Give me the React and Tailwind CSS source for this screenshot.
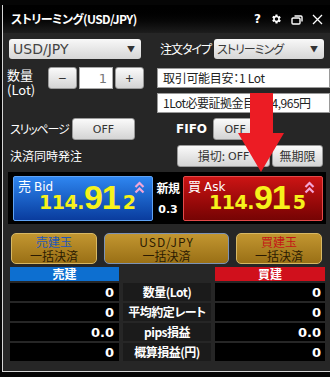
import React from 'react';

const jp = { fontFamily: '"Noto Sans CJK JP", "Noto Sans", sans-serif', fontFeatureSettings: '"palt"' };
const num = { fontFamily: '"DejaVu Sans", sans-serif' };
const big = { fontFamily: '"Liberation Sans", sans-serif' };

function Chevrons() {
  return (
    <svg width="11" height="14" viewBox="0 0 11 14" className="shrink-0">
      <path d="M1.5 6 L5.5 2 L9.5 6" fill="none" stroke="#f3a6d6" strokeWidth="2.2" />
      <path d="M1.5 11.5 L5.5 7.5 L9.5 11.5" fill="none" stroke="#f3a6d6" strokeWidth="2.2" />
    </svg>
  );
}

function Gear() {
  return (
    <svg width="12" height="12" viewBox="0 0 24 24" fill="white">
      <path d="M19.4 13a7.5 7.5 0 0 0 0-2l2.1-1.6-2-3.5-2.5 1a7.6 7.6 0 0 0-1.7-1L15 3h-4l-.4 2.7a7.6 7.6 0 0 0-1.7 1l-2.5-1-2 3.5L6.5 11a7.5 7.5 0 0 0 0 2l-2.1 1.6 2 3.5 2.5-1a7.6 7.6 0 0 0 1.7 1L11 21h4l.4-2.7a7.6 7.6 0 0 0 1.7-1l2.5 1 2-3.5zM13 15.5a3.5 3.5 0 1 1 0-7 3.5 3.5 0 0 1 0 7z" />
    </svg>
  );
}

function GrayButton({ children, className = '' }) {
  return (
    <div
      className={`shrink-0 flex items-center justify-center whitespace-nowrap leading-none rounded-[3px] border border-[#9a9a9a] bg-gradient-to-b from-[#fafafa] to-[#d4d4d4] text-[12px] text-[#333] ${className}`}
    >
      {children}
    </div>
  );
}

function PriceButton({ side, label, last, tone }) {
  const colors =
    tone === 'blue'
      ? 'from-[#2f86f0] to-[#0a3c9e] border-[#5fa3f5]'
      : 'from-[#cc1414] to-[#760404] border-[#e44a4a]';
  return (
    <div className={`relative shrink-0 w-[140px] h-[45px] border bg-gradient-to-b ${colors} rounded-[2px]`}>
      <div className="absolute left-[4px] top-[2px] flex items-baseline gap-[3px] text-white leading-none" style={jp}>
        <span className="text-[13px]">{side}</span>
        <span className="text-[12px]" style={num}>{label}</span>
      </div>
      <div className="absolute right-[7px] top-[4px]">
        <Chevrons />
      </div>
      <div className="absolute right-[16px] bottom-[6px] flex items-baseline text-[#f6f21b] font-bold leading-none">
        <span className="text-[19px] tracking-[-0.5px]" style={num}>114.</span>
        <span className="text-[34px] tracking-[-1px]" style={big}>91</span>
        <span className="text-[19px] ml-[3px]" style={num}>{last}</span>
      </div>
    </div>
  );
}

function GoldButton({ top, topColor, className = '', topClass = '' }) {
  return (
    <div
      className={`shrink-0 flex flex-col items-center justify-center rounded-[5px] border bg-gradient-to-b from-[#c29630] to-[#9a7015] text-[12px] leading-[14px] text-[#2b1b02] ${className}`}
      style={jp}
    >
      <span className={topClass} style={{ color: topColor }}>{top}</span>
      <span>一括決済</span>
    </div>
  );
}

const rows = [
  ['0', '数量(Lot)', '0'],
  ['0', '平均約定レート', '0'],
  ['0.0', 'pips損益', '0.0'],
  ['0', '概算損益(円)', '0'],
];

export default function App() {
  return (
    <div className="relative w-[330px] h-[377px] overflow-hidden bg-[#050505]" style={jp}>
      <div className="ml-[2px] mt-[5px] w-[330px] h-[367px] border-l border-b border-[#d6d6d6] bg-[#262626] flex flex-col">
        {/* title bar */}
        <div className="h-[28px] shrink-0 flex items-center justify-between pl-[8px] pr-[9px] bg-gradient-to-b from-[#000] to-[#1d1d1d]">
          <span className="text-[12px] font-bold text-white tracking-[-0.6px] leading-none whitespace-nowrap">ストリーミング(USD/JPY)</span>
          <div className="flex items-center gap-[9px] text-white">
            <span className="text-[12px] font-bold leading-none" style={num}>?</span>
            <Gear />
            <svg width="12" height="11" viewBox="0 0 12 11" fill="none" stroke="white" strokeWidth="1.4">
              <rect x="1" y="4" width="8" height="6" rx="1" />
              <path d="M3.5 2 H10 a1 1 0 0 1 1 1 V7.5" />
            </svg>
            <svg width="11" height="11" viewBox="0 0 11 11" stroke="white" strokeWidth="1.3">
              <path d="M1 1 L10 10 M10 1 L1 10" />
            </svg>
          </div>
        </div>

        <div className="flex flex-col pl-[4px] pr-[5px]">
          {/* row 1 */}
          <div className="mt-[6px] h-[20px] flex items-center">
            <div className="ml-[2px] shrink-0 w-[132px] h-[20px] rounded-[3px] bg-gradient-to-b from-[#f8f8f8] to-[#d6d6d6] flex items-center justify-between pl-[4px] pr-[6px]">
              <span className="text-[14px] text-[#444] leading-none" style={num}>USD/JPY</span>
              <span className="text-[8px] text-[#333] leading-none">▼</span>
            </div>
            <span className="ml-[19px] w-[51px] shrink-0 text-[12px] text-white whitespace-nowrap leading-none tracking-[-1px]">注文タイプ</span>
            <div className="ml-[3px] shrink-0 w-[110px] h-[20px] rounded-[3px] bg-gradient-to-b from-[#f8f8f8] to-[#d6d6d6] flex items-center justify-between pl-[3px] pr-[6px]">
              <span className="text-[12px] text-[#3a3a3a] leading-none whitespace-nowrap tracking-[-1px]">ストリーミング</span>
              <span className="text-[8px] text-[#333] leading-none">▼</span>
            </div>
          </div>

          {/* row 2-3 */}
          <div className="mt-[8px] h-[46px] flex">
            <div className="w-[146px] shrink-0 flex items-start">
              <div className="text-white text-[13px] leading-[15px] w-[38px] whitespace-nowrap">
                <div>数量</div>
                <div>(Lot)</div>
              </div>
              <GrayButton className="ml-[3px] w-[29px] h-[22px] text-[14px]">−</GrayButton>
              <div className="ml-[2px] shrink-0 w-[34px] h-[22px] bg-white border border-[#aaa] flex items-center justify-end pr-[5px] text-[13px] text-[#777] leading-none" style={num}>1</div>
              <GrayButton className="ml-[2px] w-[29px] h-[22px] text-[14px]">+</GrayButton>
            </div>
            <div className="ml-[4px] mt-[1px] flex flex-col gap-[5px]">
              <div className="w-[173px] h-[20px] bg-white border border-[#999] flex items-center pl-[5px] text-[12px] text-[#222] leading-none whitespace-nowrap tracking-[-0.3px]">取引可能目安：1 Lot</div>
              <div className="w-[173px] h-[20px] bg-white border border-[#999] flex items-center pl-[5px] text-[12px] text-[#222] leading-none whitespace-nowrap tracking-[-0.5px]">1Lot必要証拠金目安：4,965円</div>
            </div>
          </div>

          {/* row 4 */}
          <div className="mt-[5px] flex items-center h-[22px]">
            <span className="ml-[3px] shrink-0 text-[12px] text-white w-[62px] whitespace-nowrap leading-none tracking-[-1.2px]">スリッページ</span>
            <GrayButton className="w-[63px] h-[22px]"><span style={num} className="text-[11px]">OFF</span></GrayButton>
            <span className="ml-[41px] text-[12px] font-bold text-white leading-none" style={num}>FIFO</span>
            <GrayButton className="ml-[6px] w-[44px] h-[22px]"><span style={num} className="text-[11px]">OFF</span></GrayButton>
          </div>

          {/* row 5 */}
          <div className="mt-[5px] flex items-center h-[22px]">
            <span className="ml-[3px] shrink-0 text-[12px] text-white w-[167px] whitespace-nowrap leading-none">決済同時発注</span>
            <GrayButton className="w-[93px] h-[22px]">損切: <span style={num} className="ml-[3px] text-[11px]">OFF</span></GrayButton>
            <GrayButton className="ml-[2px] w-[51px] h-[22px]">無期限</GrayButton>
          </div>

          {/* price strip */}
          <div className="mt-[5px] ml-[1px] w-[318px] h-[52px] bg-black flex items-center pl-[5px]">
            <PriceButton side="売" label="Bid" last="2" tone="blue" />
            <div className="w-[30px] shrink-0 flex flex-col items-center text-white font-bold leading-none">
              <span className="text-[12px] tracking-[-0.5px]">新規</span>
              <span className="mt-[10px] text-[11px]" style={num}>0.3</span>
            </div>
            <PriceButton side="買" label="Ask" last="5" tone="red" />
          </div>

          {/* gold buttons */}
          <div className="mt-[9px] ml-[4px] flex h-[31px]">
            <GoldButton top="売建玉" topColor="#2457b8" className="w-[86px] border-[#d7b864]" />
            <GoldButton top="USD/JPY" topColor="#2b1b02" topClass="tracking-[1px]" className="ml-[7px] w-[125px] border-[#7d93b5]" />
            <GoldButton top="買建玉" topColor="#c41616" className="ml-[7px] w-[86px] border-[#d7b864]" />
          </div>

          {/* position table */}
          <div className="mt-[3px] ml-[3px] grid grid-cols-[109px_88px_110px] gap-x-[4px] gap-y-[2px]">
            <div className="h-[14px] bg-[#0d6fd0] text-white text-[12px] font-bold leading-[14px] text-center">売建</div>
            <div />
            <div className="h-[14px] bg-[#d0101c] text-white text-[12px] font-bold leading-[14px] text-center">買建</div>
            {rows.map(([l, m, r]) => (
              <React.Fragment key={m}>
                <div className="h-[18px] bg-black text-white text-[13px] font-bold flex items-center justify-end pr-[5px] leading-none" style={num}>{l}</div>
                <div className="h-[18px] bg-[#1b1b1b] text-white text-[12px] font-bold flex items-center justify-center leading-none whitespace-nowrap tracking-[-0.5px]">{m}</div>
                <div className="h-[18px] bg-black text-white text-[13px] font-bold flex items-center justify-end pr-[4px] leading-none" style={num}>{r}</div>
              </React.Fragment>
            ))}
          </div>
        </div>
      </div>

      {/* red annotation arrow */}
      <svg className="absolute left-[236px] top-[93px]" width="50" height="80" viewBox="0 0 50 80">
        <path d="M14 0 H37 V40 H48 L25 79 L2 40 H14 Z" fill="#ec1c24" />
      </svg>
    </div>
  );
}
